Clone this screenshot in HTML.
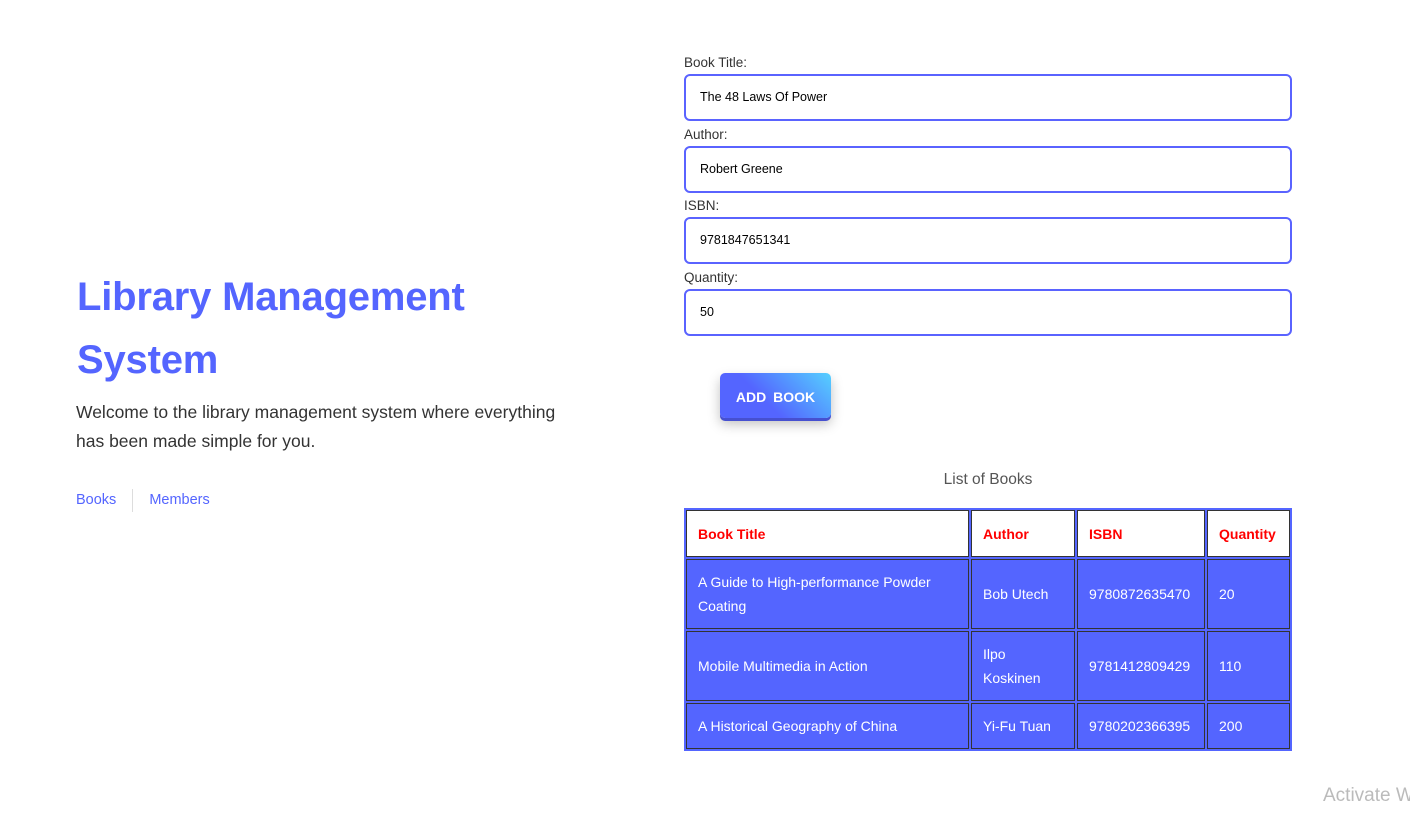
<!DOCTYPE html>
<html><head><meta charset="utf-8"><style>
body{margin:0;width:1410px;height:815px;background:#fff;font-family:"Liberation Sans",sans-serif;position:relative;overflow:hidden}
.h1{position:absolute;left:77px;top:266px;font-size:40px;line-height:63px;color:#5465ff;margin:0;font-weight:bold;letter-spacing:-0.2px}
.p{position:absolute;left:76px;top:398px;width:520px;font-size:17.5px;line-height:29px;color:#333}
.nav{position:absolute;left:76px;top:489px;font-size:14.5px;color:#5465ff}
.nav span{display:inline-block;line-height:23px}
.lbl{position:absolute;left:684px;font-size:13.5px;color:#333}
.inp{position:absolute;left:684px;height:47px;border:2px solid #5a63ff;border-radius:6px;box-sizing:border-box;width:608px;font-size:12.5px;color:#000;padding-left:14px;line-height:43px}
.btn{position:absolute;left:720px;top:373px;width:111px;height:45px;border-radius:5px;background:linear-gradient(225deg,#55d0ff,#5465ff 60%);box-shadow:0 3px 0 #4650d0,0 6px 12px rgba(0,0,0,.25);color:#fff;font-weight:bold;font-size:14px;text-align:center;line-height:48px;word-spacing:3px}
.cap{position:absolute;left:684px;width:608px;top:471px;text-align:center;font-size:15.5px;color:#555}
table{position:absolute;left:684px;top:508px;width:608px;height:243px;border:0;border-spacing:2px;border-collapse:separate;background:#5465ff;font-size:14px;table-layout:fixed}
td,th{border:1px solid #333;padding:0 11px;text-align:left;color:#fff;line-height:24px;box-sizing:border-box}
th{background:#fff;color:red;height:47px;font-weight:bold}
td{background:#5465ff}
.w{position:absolute;left:1323px;top:785px;font-size:19px;color:#bbb;white-space:nowrap}
</style></head><body>
<div class="h1">Library Management<br>System</div>
<div class="p">Welcome to the library management system where everything<br>has been made simple for you.</div>
<div class="nav"><span style="padding-right:16px;border-right:1px solid #ddd">Books</span><span style="padding-left:16px">Members</span></div>
<div class="lbl" style="top:55px">Book Title:</div>
<div class="inp" style="top:74px">The 48 Laws Of Power</div>
<div class="lbl" style="top:127px">Author:</div>
<div class="inp" style="top:146px">Robert Greene</div>
<div class="lbl" style="top:198px">ISBN:</div>
<div class="inp" style="top:217px">9781847651341</div>
<div class="lbl" style="top:270px">Quantity:</div>
<div class="inp" style="top:289px">50</div>
<div class="btn">ADD BOOK</div>
<div class="cap">List of Books</div>
<table>
<colgroup><col style="width:283px"><col style="width:104px"><col style="width:128px"><col style="width:83px"></colgroup>
<tr><th>Book Title</th><th>Author</th><th>ISBN</th><th>Quantity</th></tr>
<tr><td style="height:70px">A Guide to High-performance Powder Coating</td><td>Bob Utech</td><td>9780872635470</td><td>20</td></tr>
<tr><td style="height:70px">Mobile Multimedia in Action</td><td>Ilpo Koskinen</td><td>9781412809429</td><td>110</td></tr>
<tr><td style="height:46px">A Historical Geography of China</td><td>Yi-Fu Tuan</td><td>9780202366395</td><td>200</td></tr>
</table>
<div class="w">Activate W</div>
</body></html>
